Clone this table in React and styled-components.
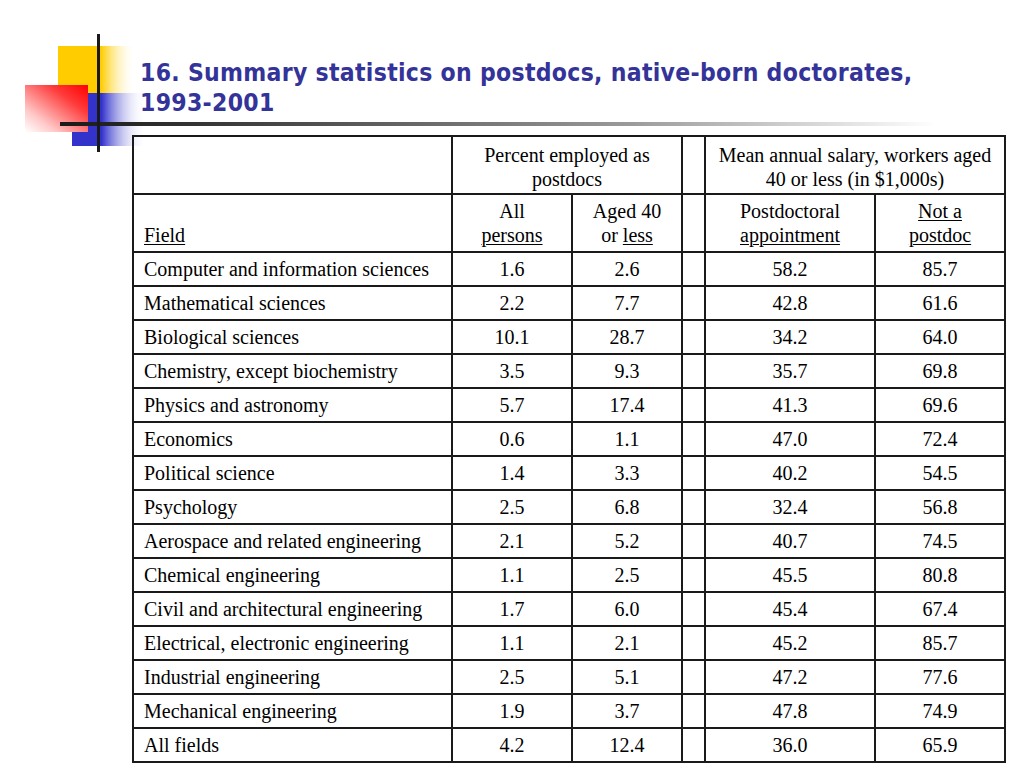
import React from 'react';
import styled, { createGlobalStyle } from 'styled-components';

const GlobalStyle = createGlobalStyle`
  body {
    margin: 0;
    background: #ffffff;
  }
`;

const Page = styled.div`
  position: relative;
  width: 1024px;
  height: 768px;
  overflow: hidden;
  background: #ffffff;
`;

const Logo = styled.svg`
  position: absolute;
  left: 0;
  top: 0;
  z-index: 0;
`;

const Title = styled.h1`
  position: relative;
  z-index: 1;
  margin: 0;
  padding: 58px 0 0 140px;
  font-family: 'DejaVu Sans', Verdana, sans-serif;
  font-stretch: condensed;
  font-size: 24.5px;
  letter-spacing: 0.3px;
  line-height: 30px;
  font-weight: bold;
  color: #333399;
`;

const TableWrap = styled.div`
  position: relative;
  z-index: 1;
  padding: 17px 0 0 132px;
`;

const Table = styled.table`
  border-collapse: collapse;
  table-layout: fixed;
  width: 872px;
  font-family: 'Liberation Serif', 'Times New Roman', serif;
  font-size: 20px;
  line-height: 24px;
  color: #000;

  td {
    border: 2px solid #1a1a1a;
    padding: 0;
  }
`;

const HeadCell = styled.td`
  height: ${p => (p.$top ? 50 : 52)}px;
  text-align: ${p => (p.$left ? 'left' : 'center')};
  vertical-align: ${p => (p.$top ? 'top' : 'bottom')};
  padding: ${p => (p.$top ? '6px 6px 0' : '0 6px 4px')} !important;
  padding-left: ${p => (p.$left ? '10px' : '6px')} !important;
`;

const Cell = styled.td`
  height: 32px;
  text-align: ${p => (p.$left ? 'left' : 'center')};
  vertical-align: middle;
  padding-left: ${p => (p.$left ? '10px' : '0')} !important;
  white-space: nowrap;
`;

const U = styled.span`
  text-decoration: underline;
  text-underline-offset: 2px;
  text-decoration-thickness: 1px;
`;

const rows = [
  ['Computer and information sciences', '1.6', '2.6', '58.2', '85.7'],
  ['Mathematical sciences', '2.2', '7.7', '42.8', '61.6'],
  ['Biological sciences', '10.1', '28.7', '34.2', '64.0'],
  ['Chemistry, except biochemistry', '3.5', '9.3', '35.7', '69.8'],
  ['Physics and astronomy', '5.7', '17.4', '41.3', '69.6'],
  ['Economics', '0.6', '1.1', '47.0', '72.4'],
  ['Political science', '1.4', '3.3', '40.2', '54.5'],
  ['Psychology', '2.5', '6.8', '32.4', '56.8'],
  ['Aerospace and related engineering', '2.1', '5.2', '40.7', '74.5'],
  ['Chemical engineering', '1.1', '2.5', '45.5', '80.8'],
  ['Civil and architectural engineering', '1.7', '6.0', '45.4', '67.4'],
  ['Electrical, electronic engineering', '1.1', '2.1', '45.2', '85.7'],
  ['Industrial engineering', '2.5', '5.1', '47.2', '77.6'],
  ['Mechanical engineering', '1.9', '3.7', '47.8', '74.9'],
  ['All fields', '4.2', '12.4', '36.0', '65.9'],
];

function CornerLogo() {
  return (
    <Logo width="960" height="160" viewBox="0 0 960 160">
      <defs>
        <linearGradient id="yel" x1="0" y1="0" x2="1" y2="0">
          <stop offset="0" stopColor="#ffcc00" />
          <stop offset="0.55" stopColor="#ffcc00" />
          <stop offset="1" stopColor="#ffffff" stopOpacity="0" />
        </linearGradient>
        <linearGradient id="blu" x1="0" y1="0" x2="1" y2="0">
          <stop offset="0" stopColor="#3333cc" />
          <stop offset="0.4" stopColor="#3333cc" />
          <stop offset="1" stopColor="#ffffff" stopOpacity="0" />
        </linearGradient>
        <linearGradient id="red" x1="1" y1="0" x2="0" y2="1">
          <stop offset="0" stopColor="#ff0000" />
          <stop offset="0.3" stopColor="#ff3a3a" />
          <stop offset="0.75" stopColor="#ffc8c8" />
          <stop offset="1" stopColor="#ffffff" />
        </linearGradient>
        <linearGradient id="bar" x1="0" y1="0" x2="1" y2="0">
          <stop offset="0" stopColor="#1a1a1a" />
          <stop offset="0.15" stopColor="#333333" />
          <stop offset="0.65" stopColor="#9a9a9a" />
          <stop offset="1" stopColor="#ffffff" />
        </linearGradient>
      </defs>
      <rect x="58" y="46" width="78" height="47" fill="url(#yel)" />
      <rect x="72" y="93" width="74" height="53" fill="url(#blu)" />
      <rect x="25" y="85" width="63" height="47" fill="url(#red)" />
      <rect x="60" y="122" width="876" height="4" fill="url(#bar)" />
      <rect x="97" y="34" width="3" height="118" fill="#1a1a1a" />
    </Logo>
  );
}

export default function App() {
  return (
    <Page>
      <GlobalStyle />
      <CornerLogo />
      <Title>
        16. Summary statistics on postdocs, native-born doctorates,
        <br />
        1993-2001
      </Title>
      <TableWrap>
        <Table>
          <colgroup>
            <col style={{ width: 319 }} />
            <col style={{ width: 120 }} />
            <col style={{ width: 110 }} />
            <col style={{ width: 23 }} />
            <col style={{ width: 170 }} />
            <col style={{ width: 130 }} />
          </colgroup>
          <tbody>
            <tr>
              <HeadCell $top />
              <HeadCell $top colSpan={2}>
                Percent employed as
                <br />
                postdocs
              </HeadCell>
              <HeadCell $top />
              <HeadCell $top colSpan={2}>
                Mean annual salary, workers aged
                <br />
                40 or less (in $1,000s)
              </HeadCell>
            </tr>
            <tr>
              <HeadCell $left>
                <U>Field</U>
              </HeadCell>
              <HeadCell>
                All
                <br />
                <U>persons</U>
              </HeadCell>
              <HeadCell>
                Aged 40
                <br />
                or <U>less</U>
              </HeadCell>
              <HeadCell />
              <HeadCell>
                Postdoctoral
                <br />
                <U>appointment</U>
              </HeadCell>
              <HeadCell>
                <U>Not a</U>
                <br />
                <U>postdoc</U>
              </HeadCell>
            </tr>
            {rows.map(r => (
              <tr key={r[0]}>
                <Cell $left>{r[0]}</Cell>
                <Cell>{r[1]}</Cell>
                <Cell>{r[2]}</Cell>
                <Cell />
                <Cell>{r[3]}</Cell>
                <Cell>{r[4]}</Cell>
              </tr>
            ))}
          </tbody>
        </Table>
      </TableWrap>
    </Page>
  );
}
